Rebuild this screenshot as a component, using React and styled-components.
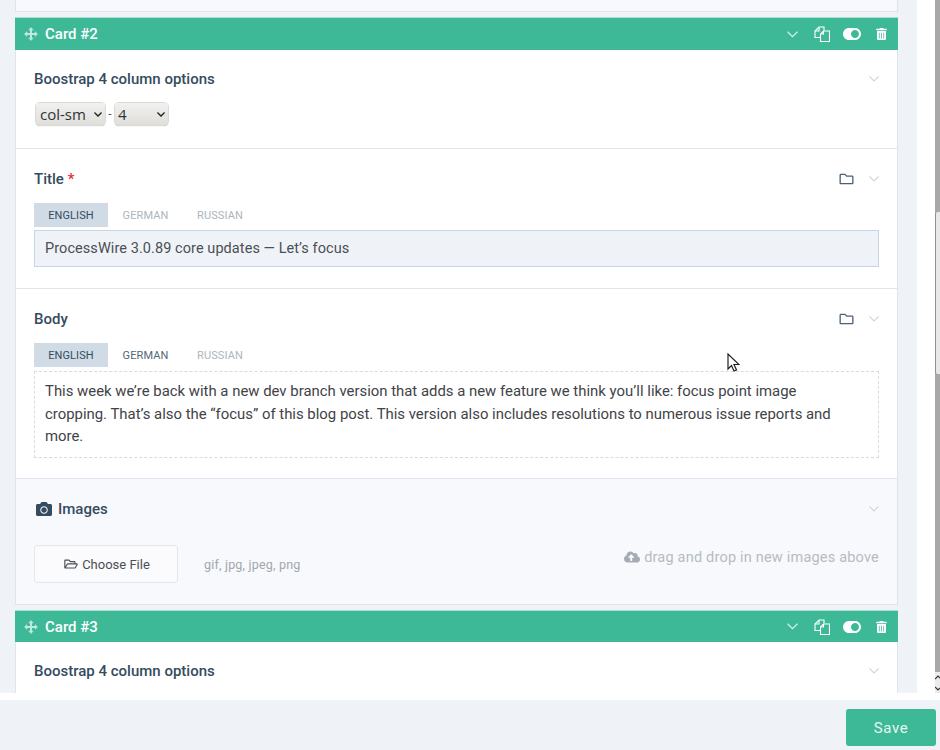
import React from "react";
import styled, { createGlobalStyle } from "styled-components";
import {
  FaToggleOn,
  FaTrashAlt,
  FaRegFolder,
  FaCamera,
  FaCloudUploadAlt,
  FaRegFolderOpen,
} from "react-icons/fa";

const Global = createGlobalStyle`
  html, body { margin: 0; padding: 0; background: #fff; }
  body { font-family: Roboto, "Liberation Sans", sans-serif; color: #354b60; overflow: hidden; }
  * { box-sizing: border-box; }
`;

const Page = styled.div`
  width: 940px;
  height: 750px;
  display: flex;
  flex-direction: column;
  background: #fff;
  overflow: hidden;
  position: relative;
`;
const ScrollRow = styled.div`
  height: 693px;
  display: flex;
  flex: none;
`;
const Content = styled.div`
  width: 917px;
  height: 693px;
  background: #eff3f8;
  padding-left: 15px;
  padding-right: 19px;
  overflow: hidden;
`;
const Gutter = styled.div`
  width: 18px;
`;
const Scrollbar = styled.div`
  width: 5px;
  background: #a8a8a8;
  display: flex;
  flex-direction: column;
  padding-top: 212px;
`;
const Thumb = styled.div`
  height: 162px;
  background: #e8e8e8;
  border-left: 1px solid #8f8f8f;
  border-radius: 2px 0 0 2px;
`;
const ScrollSpacer = styled.div`
  flex: 1;
`;
const ScrollArrows = styled.div`
  height: 21px;
  background: #ececec;
  display: flex;
  flex-direction: column;
  align-items: flex-start;
  justify-content: center;
  gap: 6px;
`;
const ScrollArrow = styled.svg`
  width: 5px;
  height: 5px;
`;
const TopStub = styled.div`
  height: 12px;
  background: #f8f9fc;
  border: 1px solid #dde4ee;
  border-top: 0;
`;
const Card = styled.div`
  margin-top: 5px;
`;
const CardHeader = styled.div`
  height: ${(p) => p.$h}px;
  background: #3eb998;
  border-top: 1px solid #a9e0cf;
  display: flex;
  align-items: center;
  padding-left: 9px;
  padding-right: 11px;
  color: #fff;
`;
const MoveIcon = styled.svg`
  width: 14px;
  height: 14px;
  margin-right: 7px;
`;
const CardTitle = styled.div`
  font-size: 15px;
  font-weight: 500;
  flex: 1;
`;
const HeaderActions = styled.div`
  display: flex;
  align-items: center;
`;
const HeaderChevron = styled.svg`
  width: 11px;
  height: 7px;
  margin-right: 16px;
`;
const CopyIcon = styled.svg`
  width: 16px;
  height: 16px;
  margin-right: 13px;
`;
const ToggleIcon = styled(FaToggleOn)`
  width: 18px;
  height: 18px;
  margin-right: 15px;
`;
const TrashIcon = styled(FaTrashAlt)`
  width: 11px;
  height: 12px;
`;
const Section = styled.div`
  background: ${(p) => (p.$muted ? "#f8f9fc" : "#fff")};
  border-left: 1px solid #dde4ee;
  border-right: 1px solid #dde4ee;
  border-bottom: ${(p) => (p.$last ? "0" : "1px solid #dde4ee")};
  padding: ${(p) => p.$top}px 18px 0;
  height: ${(p) => p.$h}px;
`;
const SectionHead = styled.div`
  display: flex;
  align-items: center;
  height: 20px;
`;
const Label = styled.div`
  font-size: 15px;
  font-weight: 500;
  color: #354b60;
  flex: 1;
  display: flex;
  align-items: center;
`;
const Required = styled.span`
  color: #ef2a2a;
  margin-left: 4px;
`;
const CameraIcon = styled(FaCamera)`
  width: 16px;
  height: 16px;
  margin: 0 6px 0 2px;
  color: #354b60;
`;
const FolderIcon = styled(FaRegFolder)`
  width: 15px;
  height: 14px;
  color: #4d6074;
  margin-right: 15px;
`;
const LabelChevron = styled.svg`
  width: 10px;
  height: 6px;
`;
const SelectRow = styled.div`
  display: flex;
  align-items: center;
  margin-top: 14px;
  margin-left: 2px;
  color: #555;
  font-size: 12px;
`;
const SelectBox = styled.div`
  position: relative;
  width: ${(p) => p.$w}px;
  height: 22px;
`;
const NativeSelect = styled.select`
  appearance: none;
  width: 100%;
  height: 100%;
  border: 0;
  border-radius: 4px;
  background: linear-gradient(#f1f1ef, #e0dedb);
  box-shadow: 0 0 0 1px #dcdad6, 0 1px 1px #a9a7a2;
  color: #2e3436;
  font: 15px "Open Sans", "Noto Sans", sans-serif;
  padding: 0 0 1px ${(p) => p.$pad}px;
`;
const SelectCaret = styled.svg`
  position: absolute;
  right: 3px;
  top: 9px;
  width: 8px;
  height: 5px;
`;
const Dash = styled.span`
  width: 10px;
  text-align: center;
`;
const Tabs = styled.div`
  display: flex;
  gap: 0.5px;
  margin-top: 14px;
  margin-bottom: ${(p) => p.$gap}px;
`;
const Tab = styled.div`
  width: 74px;
  height: 24px;
  display: flex;
  align-items: center;
  justify-content: center;
  font-size: 11px;
  letter-spacing: 0.1px;
  background: ${(p) => (p.$active ? "#d0dbe6" : "transparent")};
  color: ${(p) => (p.$active ? "#354b60" : p.$dark ? "#54667a" : "#adb5bd")};
`;
const TextInput = styled.div`
  height: 37px;
  background: #eff3f8;
  border: 1px solid #c7d5e6;
  padding-left: 10px;
  display: flex;
  align-items: center;
  font-size: 14.5px;
  letter-spacing: 0.07px;
  color: #4a4f55;
`;
const Editor = styled.div`
  height: 87px;
  border: 1px dashed #d5dbe3;
  padding: 8px 30px 0 10px;
  font-size: 14.9px;
  line-height: 22.5px;
  color: #3f4348;
`;
const UploadRow = styled.div`
  display: flex;
  align-items: center;
  margin-top: 26px;
`;
const ChooseFile = styled.div`
  width: 144px;
  height: 38px;
  background: #fbfbfd;
  border: 1px solid #e3e7ec;
  border-radius: 3px;
  display: flex;
  align-items: center;
  justify-content: center;
  padding-left: 2px;
  font-size: 13px;
  color: #4a4f55;
`;
const OpenFolder = styled(FaRegFolderOpen)`
  width: 14px;
  height: 12px;
  margin-right: 4px;
`;
const Extensions = styled.div`
  margin-left: 26px;
  font-size: 12.5px;
  color: #a1a7ae;
  letter-spacing: 0.2px;
  flex: 1;
`;
const DropHint = styled.div`
  font-size: 14.5px;
  color: #b6bbc3;
  display: flex;
  align-items: center;
  letter-spacing: 0.2px;
  margin-top: -14px;
`;
const CloudIcon = styled(FaCloudUploadAlt)`
  width: 16px;
  height: 14px;
  margin-right: 4px;
  color: #a6abb3;
`;
const Footer = styled.div`
  margin-top: 7px;
  height: 50px;
  background: #eff2f7;
  display: flex;
  justify-content: flex-end;
  padding: 9px 4px 0 0;
`;
const SaveButton = styled.button`
  width: 90px;
  height: 37px;
  background: #3eb998;
  border: 0;
  border-radius: 3px;
  color: #e6f6f1;
  font: 400 15px Roboto, sans-serif;
  letter-spacing: 0.6px;
`;
const Pointer = styled.svg`
  position: absolute;
  left: 727px;
  top: 353px;
  width: 13px;
  height: 20px;
`;

const Chevron = ({ as: C, color, weight = 1.1 }) => (
  <C viewBox="0 0 10 6" fill="none" stroke={color} strokeWidth={weight}>
    <path d="M0.5 0.5 L5 5 L9.5 0.5" />
  </C>
);

const Header = ({ title, h }) => (
  <CardHeader $h={h}>
    <MoveIcon viewBox="0 0 14 14" fill="none" stroke="#bfe9db" strokeWidth="2">
      <path d="M7 2 V12 M2 7 H12" />
      <path d="M4.6 3 L7 .4 L9.4 3 Z M4.6 11 L7 13.6 L9.4 11 Z M3 4.6 L.4 7 L3 9.4 Z M11 4.6 L13.6 7 L11 9.4 Z" fill="#bfe9db" strokeWidth=".4" />
    </MoveIcon>
    <CardTitle>{title}</CardTitle>
    <HeaderActions>
      <Chevron as={HeaderChevron} color="#d6f1e8" />
      <CopyIcon viewBox="0 0 16 16" fill="none" stroke="#fff" strokeWidth="1.1">
        <path d="M6.5 11.5 H1 V5 L5 1 H10 V4.5" />
        <path d="M5 1 V5 H1" />
        <path d="M6.5 15.5 V8 L9.5 5 H15.5 V15.5 Z" />
        <path d="M9.5 5 V8 H6.5" />
      </CopyIcon>
      <ToggleIcon />
      <TrashIcon />
    </HeaderActions>
  </CardHeader>
);

const ColumnSection = ({ last, h }) => (
  <Section $h={h} $last={last} $top={19}>
    <SectionHead>
      <Label>Boostrap 4 column options</Label>
      <Chevron as={LabelChevron} color="#cfd5dc" />
    </SectionHead>
    {!last && (
      <SelectRow>
        <SelectBox $w={69}>
          <NativeSelect defaultValue="col-sm" $pad={4}>
            <option>col-sm</option>
          </NativeSelect>
          <Chevron as={SelectCaret} color="#222" weight={1.7} />
        </SelectBox>
        <Dash>-</Dash>
        <SelectBox $w={53}>
          <NativeSelect defaultValue="4" $pad={3}>
            <option>4</option>
          </NativeSelect>
          <Chevron as={SelectCaret} color="#222" weight={1.7} />
        </SelectBox>
      </SelectRow>
    )}
  </Section>
);

export default function App() {
  return (
    <Page>
      <Global />
      <ScrollRow>
        <Content>
          <TopStub />
          <Card>
            <Header title="Card #2" h={33} />
            <ColumnSection h={99} />
            <Section $h={140} $top={20}>
              <SectionHead>
                <Label>
                  Title<Required>*</Required>
                </Label>
                <FolderIcon />
                <Chevron as={LabelChevron} color="#cfd5dc" />
              </SectionHead>
              <Tabs $gap={3}>
                <Tab $active>ENGLISH</Tab>
                <Tab>GERMAN</Tab>
                <Tab>RUSSIAN</Tab>
              </Tabs>
              <TextInput>ProcessWire 3.0.89 core updates — Let’s focus</TextInput>
            </Section>
            <Section $h={190} $top={20}>
              <SectionHead>
                <Label>Body</Label>
                <FolderIcon />
                <Chevron as={LabelChevron} color="#cfd5dc" />
              </SectionHead>
              <Tabs $gap={4}>
                <Tab $active>ENGLISH</Tab>
                <Tab $dark>GERMAN</Tab>
                <Tab>RUSSIAN</Tab>
              </Tabs>
              <Editor>
                This week we’re back with a new dev branch version that adds a new feature we think you’ll like: focus point image cropping. That’s also the “focus” of this blog post. This version also includes resolutions to numerous issue reports and more.
              </Editor>
            </Section>
            <Section $h={126} $muted $top={20}>
              <SectionHead>
                <Label>
                  <CameraIcon />
                  Images
                </Label>
                <Chevron as={LabelChevron} color="#cfd5dc" />
              </SectionHead>
              <UploadRow>
                <ChooseFile>
                  <OpenFolder />
                  Choose File
                </ChooseFile>
                <Extensions>gif, jpg, jpeg, png</Extensions>
                <DropHint>
                  <CloudIcon />
                  drag and drop in new images above
                </DropHint>
              </UploadRow>
            </Section>
          </Card>
          <Card>
            <Header title="Card #3" h={32} />
            <ColumnSection h={60} last />
          </Card>
        </Content>
        <Gutter />
        <Scrollbar>
          <Thumb />
          <ScrollSpacer />
          <ScrollArrows>
            <ScrollArrow viewBox="0 0 5 5" fill="none" stroke="#333" strokeWidth="1.2"><path d="M0 4 L3 1 L5 3" /></ScrollArrow>
            <ScrollArrow viewBox="0 0 5 5" fill="none" stroke="#333" strokeWidth="1.2"><path d="M0 1 L3 4 L5 2" /></ScrollArrow>
          </ScrollArrows>
        </Scrollbar>
      </ScrollRow>
      <Footer>
        <SaveButton>Save</SaveButton>
      </Footer>
      <Pointer viewBox="0 0 13 20">
        <path d="M1 1 V16 L4.5 12.5 L7 18 L9.5 17 L7 11.5 H12 Z" fill="#fff" stroke="#222" strokeWidth="1.2" />
      </Pointer>
    </Page>
  );
}
